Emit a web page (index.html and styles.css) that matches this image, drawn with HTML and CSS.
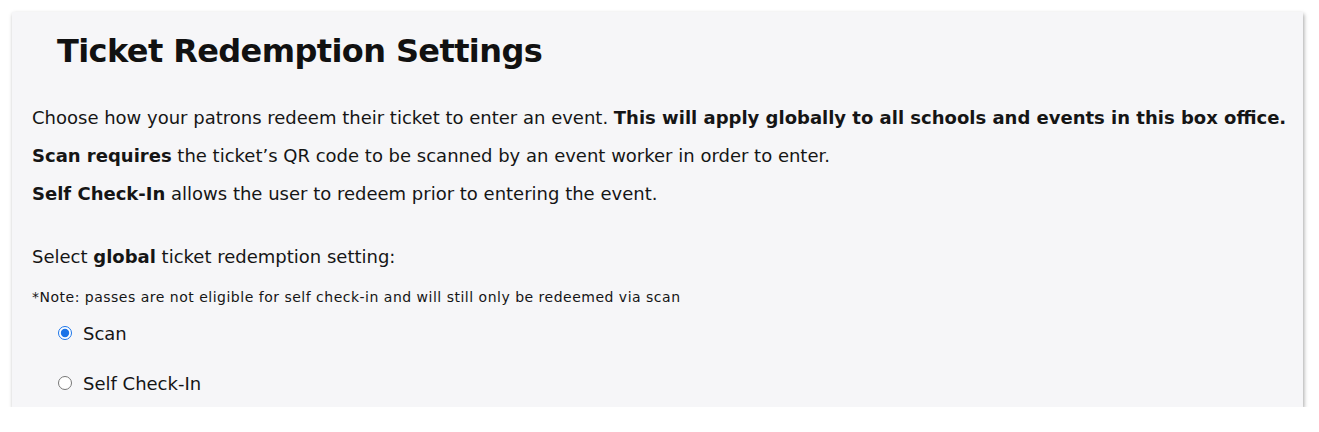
FILE: index.html
```html
<!DOCTYPE html>
<html lang="en">
<head>
  <meta charset="UTF-8" />
  <meta name="viewport" content="width=device-width, initial-scale=1.0" />
  <title>Ticket Redemption Settings</title>
  <link rel="stylesheet" href="styles.css">
</head>
<body>
  <div class="card">
    <h1>Ticket Redemption Settings</h1>

    <p class="line first">Choose how your patrons redeem their ticket to enter an event. <b>This will apply globally to all schools and events in this box office.</b></p>
    <p class="line"><b>Scan requires</b> the ticket’s QR code to be scanned by an event worker in order to enter.</p>
    <p class="line"><b>Self Check-In</b> allows the user to redeem prior to entering the event.</p>

    <p class="line select">Select <b>global</b> ticket redemption setting:</p>
    <p class="note">*Note: passes are not eligible for self check-in and will still only be redeemed via scan</p>

    <div class="options">
      <label class="option"><input type="radio" name="redeem" value="scan" checked> Scan</label>
      <label class="option"><input type="radio" name="redeem" value="self"> Self Check-In</label>
    </div>
  </div>
</body>
</html>
```

FILE: styles.css
```css
body {
  margin: 0;
  padding: 12px 16px 0 12px;
  background: #fff;
  color: #151515;
  font-family: "DejaVu Sans", Verdana, sans-serif;
}
.card {
  background: #f6f6f8;
  box-shadow: 1px 2px 4px rgba(0, 0, 0, 0.35);
  padding: 20px 4px 2px 20px;
}
h1 {
  margin: 0 0 0 25px;
  font-size: 32px;
  line-height: 38px;
  letter-spacing: -0.6px;
  color: #111;
}
.line {
  margin: 0;
  font-size: 18px;
  line-height: 38px;
  white-space: nowrap;
}
.first {
  margin-top: 29px;
}
.select {
  margin-top: 25px;
}
.note {
  margin: 9px 0 0;
  font-size: 14px;
  letter-spacing: 0.5px;
  line-height: 24px;
}
.options {
  margin-top: 2px;
  padding-left: 26px;
  display: flex;
  flex-direction: column;
  gap: 6px;
}
.option {
  display: flex;
  align-items: center;
  gap: 11px;
  font-size: 18px;
  height: 44px;
}
.option input {
  margin: 0;
  width: 14px;
  height: 14px;
  accent-color: #1a73e8;
}
```
